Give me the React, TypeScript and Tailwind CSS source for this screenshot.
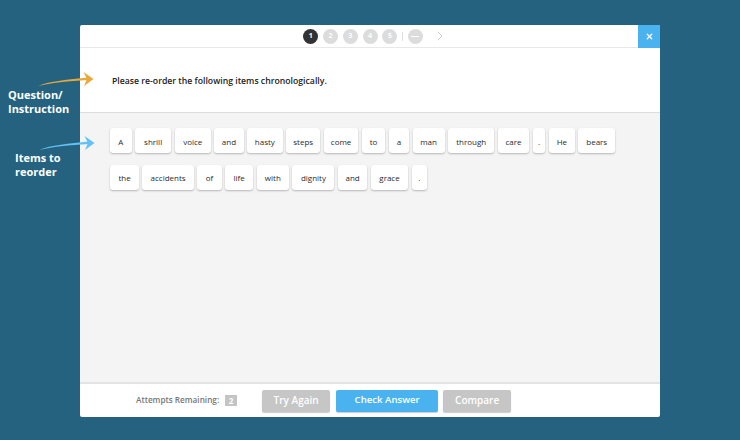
import { ChevronRight, X } from 'lucide-react';

const words = [
  { text: "A", width: "w-[21.5px]" },
  { text: "shrill", width: "w-[36.5px]" },
  { text: "voice", width: "w-[36px]" },
  { text: "and", width: "w-[29.5px]" },
  { text: "hasty", width: "w-[35.5px]" },
  { text: "steps", width: "w-[34.5px]" },
  { text: "come", width: "w-[34.5px]" },
  { text: "to", width: "w-[23.5px]" },
  { text: "a", width: "w-[20.5px]" },
  { text: "man", width: "w-[32px]" },
  { text: "through", width: "w-[46.5px]" },
  { text: "care", width: "w-[31.5px]" },
  { text: ".", width: "w-[12.5px]" },
  { text: "He", width: "w-[26.5px]" },
  { text: "bears", width: "w-[36.5px]" },
  { text: "the", width: "w-[29px]" },
  { text: "accidents", width: "w-[51.5px]" },
  { text: "of", width: "w-[24.5px]" },
  { text: "life", width: "w-[28px]" },
  { text: "with", width: "w-[32.5px]" },
  { text: "dignity", width: "w-[42px]" },
  { text: "and", width: "w-[29.5px]" },
  { text: "grace", width: "w-[37.5px]" },
  { text: ".", width: "w-[15.5px]" },
];

function Arrow({ color }: { color: string }) {
  return (
    <svg width="56" height="20" viewBox="0 0 56 20">
      <path d="M0 14 C12 9 30 7.5 50 5.5 L50 8 C30 9 12 11 0 14 Z" fill={color} />
      <path d="M45.5 0 L55.5 7 L46 14 L49 7 Z" fill={color} />
    </svg>
  );
}

export default function App() {
  return (
    <div className="relative h-[440px] w-[740px] overflow-hidden bg-[#24627f] pt-[25px] pl-[80px] font-['Open_Sans',sans-serif]">
      <div className="absolute left-[38px] top-[72px]"><Arrow color="#e8a93a" /></div>
      <div className="absolute left-[38.5px] top-[136px]"><Arrow color="#62c1f5" /></div>
      <div className="absolute left-[8px] top-[88px] text-[11px] leading-[13.5px] font-bold text-white">Question/<br />Instruction</div>
      <div className="absolute left-[15px] top-[151px] text-[11px] leading-[14px] font-bold text-white">Items to<br />reorder</div>

      <div className="flex h-[392px] w-[580px] flex-col rounded-[2px] bg-white">
        <div className="relative flex h-[23px] items-center justify-center border-b border-[#e8e8e8] pr-[1px]">
          <div className="flex items-center gap-[4.8px] pl-[12px]">
            <span className="flex h-[15px] w-[15px] items-center justify-center rounded-full bg-[#333333] text-[7px] font-bold text-white">1</span>
            {["2", "3", "4", "5"].map(n => (
              <span key={n} className="flex h-[15px] w-[15px] items-center justify-center rounded-full bg-[#dcdcdc] text-[7px] font-bold text-white">{n}</span>
            ))}
            <span className="h-[9px] w-px bg-[#dddddd]" />
            <span className="flex h-[15px] w-[15px] items-center justify-center rounded-full bg-[#dcdcdc]">
              <span className="h-px w-[8px] bg-white" />
            </span>
            <ChevronRight size={16} strokeWidth={1.3} className="ml-[4px] text-[#c8c8c8]" />
          </div>
          <div className="absolute right-0 top-0 flex h-[23px] w-[22px] items-center justify-center bg-[#4ab3ef]">
            <X size={9} strokeWidth={3.5} className="text-white" />
          </div>
        </div>

        <div className="flex h-[65px] items-center border-b border-[#dddddd] pt-[4px] pl-[32px]">
          <p className="text-[8.7px] font-semibold text-[#222222]">Please re-order the following items chronologically.</p>
        </div>

        <div className="flex flex-1 flex-wrap content-start gap-x-[3.4px] gap-y-[11.5px] bg-[#f4f4f4] pt-[15px] pl-[30px] pr-[40px]">
          {words.map((word, index) => (
            <span key={index} className={`flex h-[25px] items-center justify-center rounded-[3px] bg-white pt-[2px] text-[8px] font-medium text-[#2b2b2b] shadow-[0_1px_2px_rgba(0,0,0,0.25)] ${word.width}`}>
              {word.text}
            </span>
          ))}
        </div>

        <div className="flex h-[35px] items-center border-t-2 border-[#e3e3e3] pl-[56px]">
          <span className="text-[8.2px] font-semibold text-[#777777]">Attempts Remaining:</span>
          <span className="ml-[6px] flex h-[11px] w-[12px] items-center justify-center bg-[#c4c4c4] text-[8px] font-bold text-white">2</span>
          <button className="ml-[25px] h-[22px] w-[68px] rounded-[2px] bg-[#c6c6c6] text-[10px] font-semibold text-white shadow-[0_1px_1px_rgba(0,0,0,0.2)]">Try Again</button>
          <button className="ml-[6px] h-[22px] w-[102px] rounded-[2px] bg-[#4ab3ef] text-[9.6px] font-semibold text-white shadow-[0_1px_1px_rgba(0,0,0,0.2)]">Check Answer</button>
          <button className="ml-[5px] h-[22px] w-[68px] rounded-[2px] bg-[#c6c6c6] text-[10px] font-semibold text-white shadow-[0_1px_1px_rgba(0,0,0,0.2)]">Compare</button>
        </div>
      </div>
    </div>
  );
}
